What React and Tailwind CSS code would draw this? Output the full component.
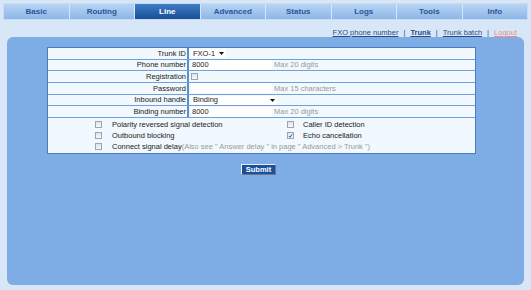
import React from 'react';

const tabs = ['Basic', 'Routing', 'Line', 'Advanced', 'Status', 'Logs', 'Tools', 'Info'];

const rows = [
    { label: 'Trunk ID', kind: 'select', value: 'FXO-1', width: 'w-[35px]' },
    { label: 'Phone number', kind: 'input', value: '8000', hint: 'Max 20 digits' },
    { label: 'Registration', kind: 'check' },
    { label: 'Password', kind: 'input', value: '', hint: 'Max 15 characters' },
    { label: 'Inbound handle', kind: 'select', value: 'Binding', width: 'w-[86px]' },
    { label: 'Binding number', kind: 'input', value: '8000', hint: 'Max 20 digits' },
];

const Check = ({ checked }) => (
    <span className="flex h-[7px] w-[7px] items-center justify-center border border-[#9aa6b4] bg-gradient-to-b from-[#dfe4ea] to-[#f7f9fb]">
        {checked && (
            <svg width="6" height="6" viewBox="0 0 6 6">
                <path d="M1 3 L2.5 4.6 L5 1" fill="none" stroke="#2c3f7a" strokeWidth="1.1" />
            </svg>
        )}
    </span>
);

const Arrow = () => (
    <svg width="5" height="3" viewBox="0 0 5 3" className="shrink-0">
        <path d="M0 0 L5 0 L2.5 3 Z" fill="#111" />
    </svg>
);

const App = () => {
    return (
        <div className="h-[290px] w-[531px] overflow-hidden bg-[#d7e7f8] px-[3px] pt-[3px] font-['Liberation_Sans',Arial,sans-serif]">
            {/* top menu */}
            <div className="grid h-[17px] grid-cols-8 gap-px border border-[#c8dcf3]">
                {tabs.map((t) => (
                    <div
                        key={t}
                        className={
                            t === 'Line'
                                ? 'flex items-center justify-center bg-gradient-to-b from-[#3f7dc6] to-[#174f96] text-[8px] font-bold text-white'
                                : 'flex items-center justify-center bg-gradient-to-b from-[#b9d4f3] to-[#8cb6e8] text-[8px] font-bold text-[#2c5597]'
                        }
                    >
                        {t}
                    </div>
                ))}
            </div>

            {/* sub links */}
            <div className="flex h-[17px] items-end justify-end gap-[5px] pr-[11px] text-[7.5px] leading-[9px] text-[#2c4a86]">
                <span className="underline">FXO phone number</span>
                <span>|</span>
                <span className="font-bold underline">Trunk</span>
                <span>|</span>
                <span className="underline">Trunk batch</span>
                <span>|</span>
                <span className="text-[#f08a80] underline">Logout</span>
            </div>

            {/* panel */}
            <div className="mx-[4px] h-[248px] rounded-[6px] bg-[#7eade5] pt-[10px]">
                <div className="ml-[40px] w-[429px] border border-[#4a7bc0] bg-[#f1f8fe] text-[7.5px] text-[#222]">
                    {rows.map((r) => (
                        <div key={r.label} className="flex h-[11.7px] border-b border-[#6f9fdc]">
                            <div className="flex w-[141px] items-center justify-end border-r-2 border-[#5a8cd0] pr-[1px]">
                                {r.label}
                            </div>
                            <div className="flex flex-1 items-center pl-[2px]">
                                {r.kind === 'select' && (
                                    <div className={`flex h-[9px] items-center justify-between bg-white px-[2px] ${r.width}`}>
                                        <span>{r.value}</span>
                                        <Arrow />
                                    </div>
                                )}
                                {r.kind === 'input' && (
                                    <>
                                        <div className="flex h-[10px] w-[81px] items-center bg-white px-[1px]">{r.value}</div>
                                        <span className="ml-[2px] text-[#9a9a9a]">{r.hint}</span>
                                    </>
                                )}
                                {r.kind === 'check' && <Check />}
                            </div>
                        </div>
                    ))}

                    {/* options */}
                    <div className="grid grid-cols-[54px_185px_16px_1fr] grid-rows-3 items-center pt-[1px] pb-[1px] text-[7.5px] leading-[11px]">
                        <div className="flex justify-end"><Check /></div>
                        <div className="pl-[10px]">Polarity reversed signal detection</div>
                        <Check />
                        <div>Caller ID detection</div>

                        <div className="flex justify-end"><Check /></div>
                        <div className="pl-[10px]">Outbound blocking</div>
                        <Check checked />
                        <div>Echo cancellation</div>

                        <div className="flex justify-end"><Check /></div>
                        <div className="col-span-3 whitespace-nowrap pl-[10px]">
                            Connect signal delay
                            <span className="text-[#9a9a9a]">(Also see " Answer delay " in page " Advanced &gt; Trunk ")</span>
                        </div>
                    </div>
                </div>

                <div className="mt-[10px] flex pl-[234px]">
                    <button className="h-[11px] w-[35px] border border-t-[#e8eef7] border-l-[#e8eef7] border-r-[#6b7686] border-b-[#6b7686] bg-[#1b4fa0] text-[7.5px] font-bold leading-[9px] text-white">
                        Submit
                    </button>
                </div>
            </div>
        </div>
    );
};

export default App;
